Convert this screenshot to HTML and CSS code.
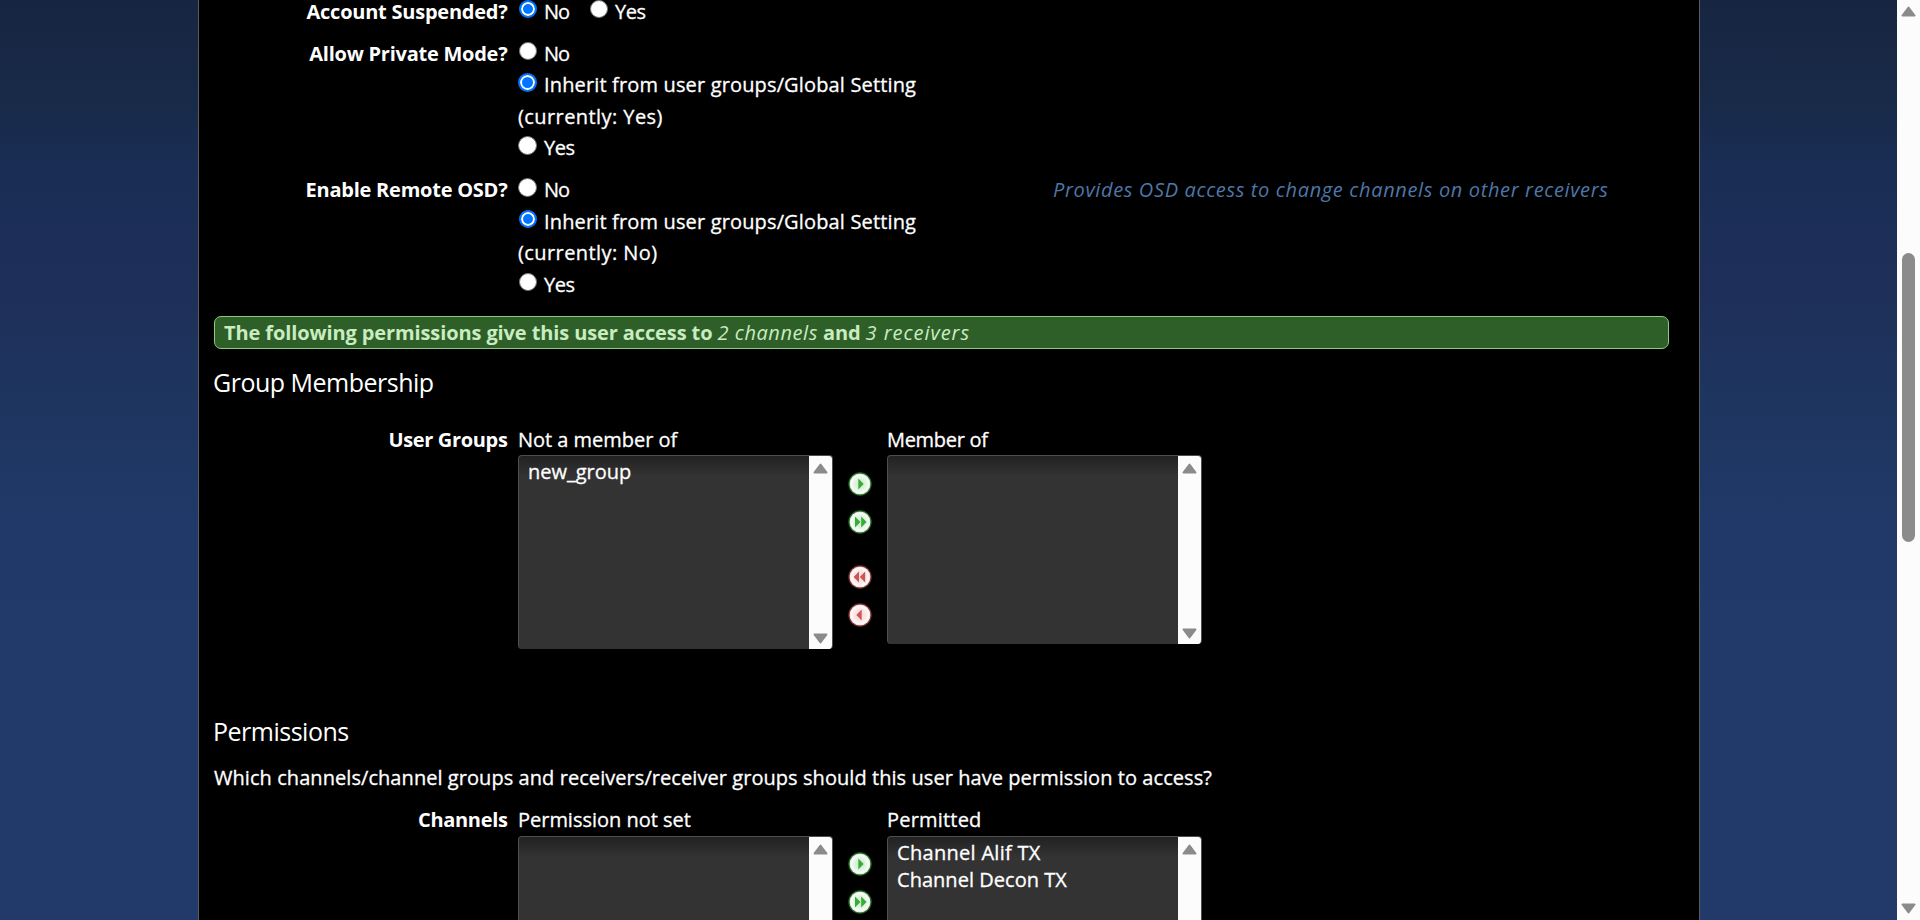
FILE: index.html
```
<!DOCTYPE html>
<html lang="en">
<head>
<meta charset="utf-8">
<title>Edit User</title>
<link rel="stylesheet" href="styles.css">
</head>
<body>
<svg class="defs" width="0" height="0">
  <defs>
    <radialGradient id="greenFill"><stop offset="0" stop-color="#c5ebc5"/><stop offset="0.55" stop-color="#e2f4e2"/><stop offset="0.85" stop-color="#fafdfa"/><stop offset="1" stop-color="#cfe0cf"/></radialGradient>
    <radialGradient id="redFill"><stop offset="0" stop-color="#f9d8d8"/><stop offset="0.55" stop-color="#fbe6e6"/><stop offset="0.85" stop-color="#fffafa"/><stop offset="1" stop-color="#e8d2d2"/></radialGradient>
    <symbol id="add" viewBox="0 0 24 24"><circle cx="12" cy="12" r="11" fill="none" stroke="#1d6b1d" stroke-width="1.4"/><circle cx="12" cy="12" r="10.5" fill="url(#greenFill)"/><path d="M10.3 6.6v10.8l5.4-5.4z" fill="#3aaa3a"/></symbol>
    <symbol id="add-all" viewBox="0 0 24 24"><circle cx="12" cy="12" r="11" fill="none" stroke="#1d6b1d" stroke-width="1.4"/><circle cx="12" cy="12" r="10.5" fill="url(#greenFill)"/><path d="M7 6.6v10.8l5.4-5.4zM13.2 6.6v10.8l5.4-5.4z" fill="#3aaa3a"/></symbol>
    <symbol id="remove-all" viewBox="0 0 24 24"><circle cx="12" cy="12" r="11" fill="none" stroke="#7c2c2c" stroke-width="1.4"/><circle cx="12" cy="12" r="10.5" fill="url(#redFill)"/><path d="M11 6.6v10.8l-5.4-5.4zM17.2 6.6v10.8l-5.4-5.4z" fill="#cf5454"/></symbol>
    <symbol id="remove" viewBox="0 0 24 24"><circle cx="12" cy="12" r="11" fill="none" stroke="#7c2c2c" stroke-width="1.4"/><circle cx="12" cy="12" r="10.5" fill="url(#redFill)"/><path d="M13.7 6.6v10.8l-5.4-5.4z" fill="#cf5454"/></symbol>
    <symbol id="up" viewBox="0 0 15 11"><path d="M7.5 1.5L13.5 9.5H1.5z" fill="#8b8b8b" stroke="#8b8b8b" stroke-width="2" stroke-linejoin="round"/></symbol>
    <symbol id="down" viewBox="0 0 15 11"><path d="M7.5 9.5L13.5 1.5H1.5z" fill="#8b8b8b" stroke="#8b8b8b" stroke-width="2" stroke-linejoin="round"/></symbol>
  </defs>
</svg>
<div class="window">
  <div class="viewport">
    <main class="panel">
      <div class="row first">
        <div class="label">Account Suspended?</div>
        <div class="options inline">
          <label class="option"><i class="radio on"></i><span class="no">No</span></label>
          <label class="option"><i class="radio"></i><span class="yes">Yes</span></label>
        </div>
      </div>
      <div class="row">
        <div class="label">Allow Private Mode?</div>
        <div class="options">
          <label class="option"><i class="radio"></i><span class="no">No</span></label>
          <label class="option"><i class="radio large on"></i><span>Inherit from user groups/Global Setting</span></label>
          <div class="current">(currently: Yes)</div>
          <label class="option"><i class="radio large"></i><span class="yes">Yes</span></label>
        </div>
      </div>
      <div class="row">
        <div class="label">Enable Remote OSD?</div>
        <div class="options">
          <label class="option"><i class="radio large"></i><span class="no">No</span></label>
          <label class="option"><i class="radio on"></i><span>Inherit from user groups/Global Setting</span></label>
          <div class="current">(currently: No)</div>
          <label class="option"><i class="radio"></i><span class="yes">Yes</span></label>
        </div>
        <div class="hint">Provides OSD access to change channels on other receivers</div>
      </div>

      <div class="banner"><b>The following permissions give this user access to</b> <em>2 channels</em> <b>and</b> <em class="wide">3 receivers</em></div>

      <h2 class="heading">Group Membership</h2>
      <div class="row groups">
        <div class="label tight">User Groups</div>
        <div class="picker">
          <div class="side">
            <div class="caption">Not a member of</div>
            <div class="list tall">
              <ul class="items"><li class="item snug">new_group</li></ul>
              <div class="bar"><svg class="arrow"><use href="#up"/></svg><svg class="arrow"><use href="#down"/></svg></div>
            </div>
          </div>
          <div class="buttons">
            <svg class="button"><use href="#add"/></svg>
            <svg class="button"><use href="#add-all"/></svg>
            <svg class="button split"><use href="#remove-all"/></svg>
            <svg class="button"><use href="#remove"/></svg>
          </div>
          <div class="side">
            <div class="caption narrow">Member of</div>
            <div class="list">
              <ul class="items"></ul>
              <div class="bar"><svg class="arrow"><use href="#up"/></svg><svg class="arrow"><use href="#down"/></svg></div>
            </div>
          </div>
        </div>
      </div>

      <h2 class="heading permissions">Permissions</h2>
      <p class="question">Which channels/channel groups and receivers/receiver groups should this user have permission to access?</p>
      <div class="row channels">
        <div class="label tight">Channels</div>
        <div class="picker">
          <div class="side">
            <div class="caption">Permission not set</div>
            <div class="list">
              <ul class="items"></ul>
              <div class="bar"><svg class="arrow"><use href="#up"/></svg><svg class="arrow"><use href="#down"/></svg></div>
            </div>
          </div>
          <div class="buttons">
            <svg class="button"><use href="#add"/></svg>
            <svg class="button"><use href="#add-all"/></svg>
            <svg class="button split"><use href="#remove-all"/></svg>
            <svg class="button"><use href="#remove"/></svg>
          </div>
          <div class="side">
            <div class="caption loose">Permitted</div>
            <div class="list">
              <ul class="items"><li class="item alif">Channel Alif TX</li><li class="item">Channel Decon TX</li></ul>
              <div class="bar"><svg class="arrow"><use href="#up"/></svg><svg class="arrow"><use href="#down"/></svg></div>
            </div>
          </div>
        </div>
      </div>
    </main>
  </div>
  <div class="scrollbar">
    <svg class="arrow"><use href="#up"/></svg>
    <div class="thumb"></div>
    <svg class="arrow"><use href="#down"/></svg>
  </div>
</div>
</body>
</html>
```
FILE: styles.css
```
* { box-sizing: border-box; }

body {
  margin: 0;
  height: 920px;
  overflow: hidden;
  font: 20px/31.5px "Trebuchet MS", "Open Sans", sans-serif;
  color: #fff;
}

.defs { display: block; }

.window { display: flex; width: 1920px; height: 920px; }

.viewport {
  width: 1897px;
  height: 920px;
  padding-left: 198px;
  overflow: hidden;
  background: linear-gradient(#172541 0, #182a48 100px, #1a2d55 170px, #1e3059 300px, #1e3560 400px, #213968 530px, #223a69 620px);
}

.panel {
  width: 1502px;
  height: 1200px;
  padding: 0 30px 0 15px;
  background: #000;
  border: solid #5b5b5b;
  border-width: 0 1px;
}

.row { display: flex; gap: 10px; padding-bottom: 10.5px; }
.row.first { line-height: 24px; padding-bottom: 13.5px; }
.row.first .option { height: 24px; }
.row.first .radio { margin-bottom: 6.5px; }

.label {
  width: 294px;
  padding-right: 0.5px;
  text-align: right;
  font-weight: bold;
  letter-spacing: -0.24px;
}

.label.tight { letter-spacing: -0.34px; }

.options { width: 525px; }
.options.inline { display: flex; gap: 20px; }

.option {
  display: flex;
  align-items: center;
  gap: 7px;
  height: 31.5px;
  letter-spacing: 0.15px;
}

.option, .current, .caption, .item, .question { -webkit-text-stroke: 0.3px #fff; }

.no { letter-spacing: -1px; }
.yes { letter-spacing: -0.45px; }
.current { letter-spacing: 0.42px; }

/* The dot sits slightly above the text's centre line. */
.radio {
  width: 18px;
  height: 18px;
  margin: 0 0 5px 1px;
  border: 1px solid #767676;
  border-radius: 50%;
  background: #fff;
}

.radio.large { width: 19px; height: 19px; margin-left: 0; }
.radio.on { border: 2px solid #0075ff; box-shadow: inset 0 0 0 2px #fff; background: #0075ff; }

.hint {
  color: #4d77a8;
  font-style: italic;
  letter-spacing: 0.645px;
  white-space: nowrap;
}

.banner {
  height: 33px;
  margin-top: 5px;
  padding-left: 9px;
  border: 1px solid #8fc97f;
  border-radius: 7px;
  background: #2f5f28;
  color: #c9ecc0;
  line-height: 31px;
  letter-spacing: -0.11px;
}

.banner em { letter-spacing: 0.55px; }
.banner em.wide { letter-spacing: 0.97px; }

.heading {
  margin: 16px 0 25.5px -1px;
  font-size: 25px;
  font-weight: normal;
  line-height: 34px;
  letter-spacing: -0.5px;
}

.heading.permissions { margin: 0 0 13.5px -1px; }

.question { margin: 0 0 10.5px; letter-spacing: 0.063px; }

.groups { height: 290px; }
.picker { display: flex; }
.side { width: 315px; }

.caption { height: 31px; letter-spacing: -0.02px; }
.caption.narrow { letter-spacing: -0.3px; }
.caption.loose { letter-spacing: 0.2px; }
.channels .caption { height: 32px; }

.list {
  display: flex;
  height: 189px;
  border: solid #4e4e4e;
  border-width: 1px 1px 0;
  border-radius: 4px;
  overflow: hidden;
  background: linear-gradient(#222, #333 20px);
}

.list.tall { height: 194px; }

.items { flex: 1; margin: 0; padding: 2px 9px; list-style: none; }
.item { line-height: 27px; letter-spacing: 0.03px; }
.item.snug { letter-spacing: 0; }
.item.alif { letter-spacing: 0.3px; }

.bar {
  display: flex;
  flex-direction: column;
  align-items: center;
  justify-content: space-between;
  width: 23px;
  padding: 7px 0 5px;
  background: #fcfcfc;
}

.arrow { display: block; width: 15px; height: 11px; }

.buttons {
  display: flex;
  flex-direction: column;
  align-items: center;
  gap: 14px;
  width: 54px;
  padding-top: 48px;
}

.button { width: 24px; height: 24px; flex: none; }
.button.split { margin-top: 17px; }

.scrollbar {
  display: flex;
  flex-direction: column;
  align-items: center;
  width: 23px;
  padding: 6px 0;
  background: #fcfcfc;
}

.thumb { width: 13px; height: 289px; margin: 236px 0 361px; border-radius: 7px; background: #8b8b8b; }
```
